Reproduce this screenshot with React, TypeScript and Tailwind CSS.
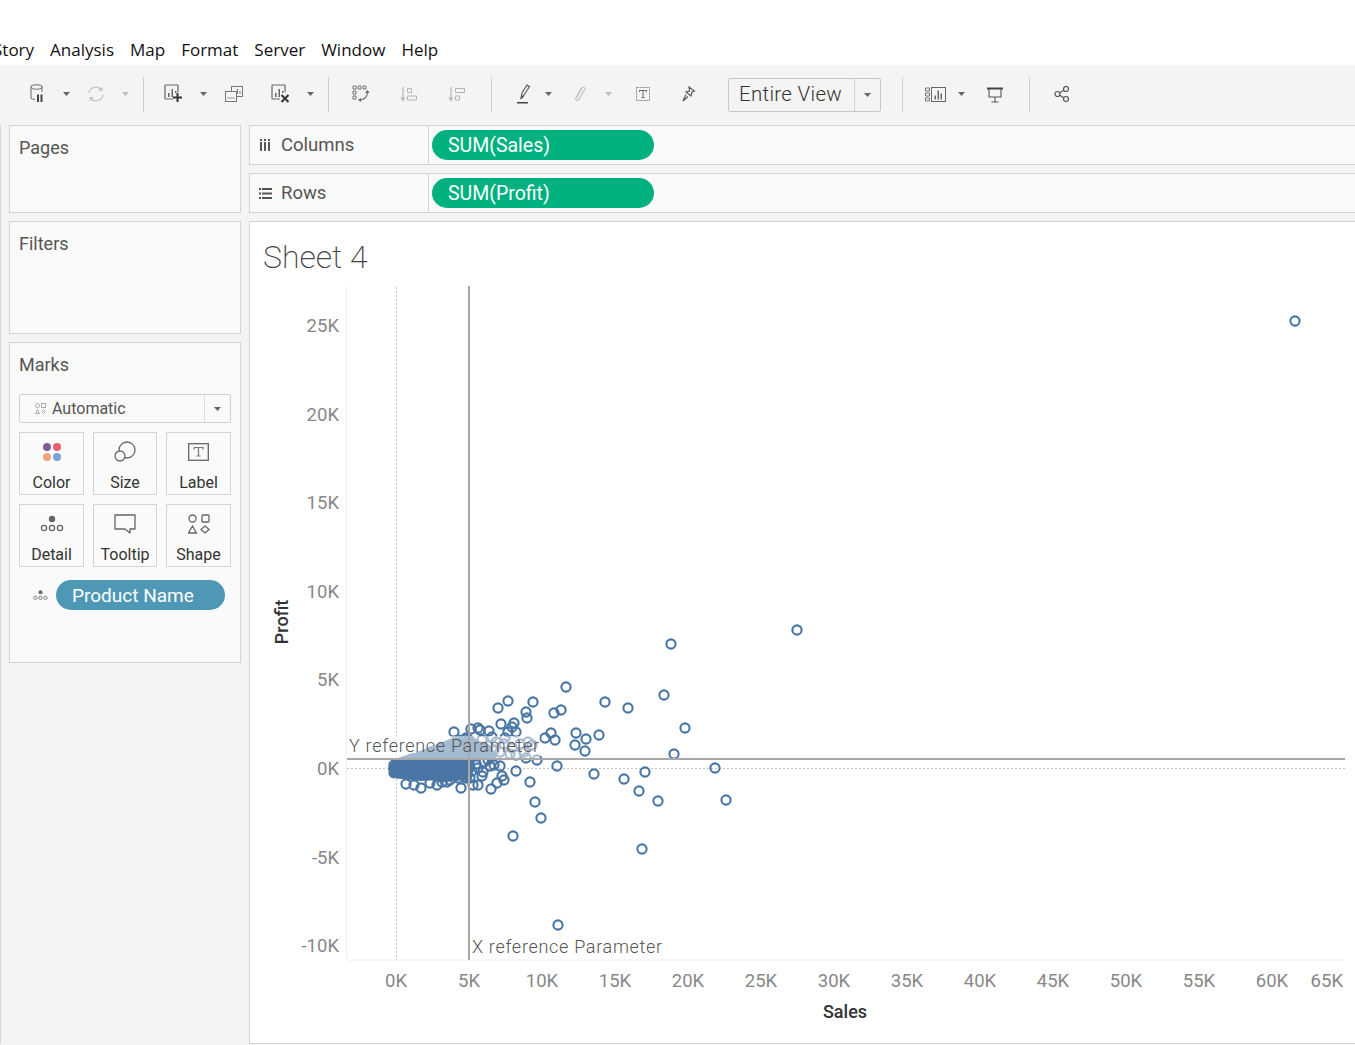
import React from 'react';

const Caret = ({ light = false, className = '' }: { light?: boolean; className?: string }) => (
  <svg width="7" height="4" viewBox="0 0 7 4" className={className}>
    <path d="M0 0h7L3.5 4z" fill={light ? '#bdbdbd' : '#666'} />
  </svg>
);

const Sep = ({ className = '' }: { className?: string }) => <div className={`w-px h-[35px] bg-[#d0d0d0] ${className}`} />;

const BarsFrame = ({ children }: { children?: React.ReactNode }) => (
  <svg width="22" height="22" viewBox="0 0 22 22" fill="none">
    <path d="M10 16H2.5a.5.5 0 0 1-.5-.5V2.500a.5.5 0 0 1 .5-.5h12a.5.500 0 0 1 .5.5V9" stroke="#666" strokeWidth="1.200" />
    <path d="M5 10h1.500v4H5zM8.500 6H10v8H8.500zM12 8h1.500v2H12z" fill="#666" />
    {children}
  </svg>
);

const Cluster = ({ small = false }: { small?: boolean }) => (
  <svg width={small ? 15 : 24} height={small ? 12 : 19} viewBox="0 0 24 19" fill="none">
    <circle cx="12" cy="5" r="3.200" fill="#666" />
    <circle cx="4" cy="14" r="2.600" stroke="#666" strokeWidth="1.300" />
    <circle cx="12" cy="14" r="2.600" stroke="#666" strokeWidth="1.300" />
    <circle cx="20" cy="14" r="2.600" stroke="#666" strokeWidth="1.300" />
  </svg>
);

const Toolbar = () => (
  <div className="h-[60px] shrink-0 bg-[#f4f4f4] flex items-center pl-[29px] pb-[2px]">
    <svg width="17" height="20" viewBox="0 0 17 20" fill="none">
      <ellipse cx="7.500" cy="3" rx="5.500" ry="2.200" stroke="#777" strokeWidth="1.100" />
      <path d="M2 3v10.500c0 1 1.500 1.700 4 2M13 3v5" stroke="#777" strokeWidth="1.100" />
      <path d="M8 10.500h2V18H8zM11.500 10.500h2V18h-2z" fill="#444" />
    </svg>
    <Caret className="ml-[17px]" />
    <svg width="18" height="18" viewBox="0 0 18 18" fill="none" className="ml-[17px]">
      <path d="M2 8a7 7 0 0 1 12.500-3M16 10a7 7 0 0 1-12.500 3" stroke="#c4c4c4" strokeWidth="1.400" />
      <path d="M15.500 1.500v4.500h-4.500zM2.500 16.500V12H7z" fill="#c4c4c4" />
    </svg>
    <Caret light className="ml-[17px]" />
    <Sep className="ml-[14px]" />
    <div className="ml-[19px] flex"><BarsFrame><path d="M14.500 10v9M10 14.500h9" stroke="#333" strokeWidth="2" /></BarsFrame></div>
    <Caret className="ml-[15px]" />
    <svg width="18" height="17" viewBox="0 0 18 17" fill="none" className="ml-[18px]">
      <rect x="6.500" y="0.500" width="11" height="10" fill="#f4f4f4" stroke="#777" />
      <path d="M10 8V6M12.500 8V3M15 8V5" stroke="#777" />
      <rect x="0.500" y="5.500" width="11" height="10" fill="#f4f4f4" stroke="#777" />
      <path d="M3 13v-2M5 13v-2M7 13v-2M9 13v-2" stroke="#999" />
    </svg>
    <div className="ml-[27px] flex"><BarsFrame><path d="M11.500 12l7 7M18.500 12l-7 7" stroke="#333" strokeWidth="2" /></BarsFrame></div>
    <Caret className="ml-[15px]" />
    <Sep className="ml-[14px]" />
    <svg width="18" height="18" viewBox="0 0 18 18" fill="none" className="ml-[23px]">
      <path d="M1 1h3v3H1zM6 1h3v3H6zM11 1h3v3h-3zM1 6h3v3H1zM1 11h3v3H1z" stroke="#666" strokeWidth="0.900" />
      <path d="M15.500 7c0 4-2.500 7-7 8" stroke="#666" strokeWidth="1.100" />
      <path d="M13 8l2.500-3L17.500 8zM9 13v4l-3-2z" fill="#666" />
    </svg>
    <svg width="18" height="17" viewBox="0 0 18 17" fill="none" className="ml-[30px]">
      <path d="M3 1v13" stroke="#b5b5b5" strokeWidth="1.200" />
      <path d="M0.500 11.500h5L3 15.500z" fill="#b5b5b5" />
      <path d="M7.500 2.500h4v4h-4zM7.500 10h9v4h-9z" stroke="#b5b5b5" />
    </svg>
    <svg width="18" height="17" viewBox="0 0 18 17" fill="none" className="ml-[30px]">
      <path d="M3 1v13" stroke="#b5b5b5" strokeWidth="1.200" />
      <path d="M0.500 11.500h5L3 15.500z" fill="#b5b5b5" />
      <path d="M7.500 2.500h9v4h-9zM7.500 10h4v4h-4z" stroke="#b5b5b5" />
    </svg>
    <Sep className="ml-[25px]" />
    <svg width="15" height="20" viewBox="0 0 15 20" fill="none" className="ml-[25px]">
      <path d="M4 14l1-5 5-8 2.500 1.500-5 8z" stroke="#555" strokeWidth="1.100" />
      <path d="M4 15l3-3" stroke="#555" />
      <path d="M0 18h11v1.500H0z" fill="#444" />
    </svg>
    <Caret className="ml-[13px]" />
    <svg width="14" height="18" viewBox="0 0 14 18" fill="none" className="ml-[21px]">
      <path d="M4 12l5-9c1-1.500 3.500-.5 2.800 1.200L6 14.500c-1 1.800-4 .8-3.200-1.200L8 3.500" stroke="#bdbdbd" strokeWidth="1.100" />
    </svg>
    <Caret light className="ml-[18px]" />
    <svg width="14" height="14" viewBox="0 0 14 14" fill="none" className="ml-[24px]">
      <rect x="0.500" y="0.500" width="13" height="13" stroke="#888" strokeDasharray="2 1" />
      <path d="M3.500 3.500h7v1.500M3.500 3.500V5M7 3.500V10.500M5.500 10.500h3" stroke="#666" />
    </svg>
    <svg width="14" height="18" viewBox="0 0 14 18" fill="none" className="ml-[32px]">
      <path d="M7 2l5.500 4-2.500 1-1 4-5-4 3.500-1zM4 9.500L1 16l5-4.500" stroke="#555" strokeWidth="1.100" />
    </svg>
    <div className="ml-[32px] w-[153px] h-[34px] mt-[1px] border border-[#c8c8c8] rounded-[2px] flex items-center">
      <span className="flex-1 pl-[10px] text-[20.5px] font-light text-[#333] tracking-[0.3px] leading-none">Entire View</span>
      <div className="w-[26px] h-full border-l border-[#d4d4d4] flex items-center justify-center"><Caret /></div>
    </div>
    <Sep className="ml-[21px]" />
    <svg width="21" height="15" viewBox="0 0 21 15" fill="none" className="ml-[22px]">
      <path d="M.5 1h4v3h-4zM.5 6h4v3h-4zM.5 11h4v3h-4z" stroke="#666" strokeWidth="0.900" />
      <rect x="6.500" y="0.500" width="14" height="14" stroke="#666" />
      <path d="M9.500 8.500h1.500v4H9.500zM12.500 3.500H14v9h-1.500zM15.500 6.500H17v6h-1.500z" fill="#666" />
    </svg>
    <Caret className="ml-[12px]" />
    <svg width="18" height="17" viewBox="0 0 18 17" fill="none" className="ml-[21px]">
      <path d="M1 2.500h16" stroke="#444" strokeWidth="2" />
      <path d="M3 3v8h12V3M9 11v5M5.500 16h7" stroke="#555" strokeWidth="1.100" />
    </svg>
    <Sep className="ml-[25px]" />
    <svg width="16" height="16" viewBox="0 0 16 16" fill="none" className="ml-[24px]">
      <circle cx="3.500" cy="8" r="2.500" stroke="#555" strokeWidth="1.200" />
      <circle cx="12" cy="3" r="2.500" stroke="#555" strokeWidth="1.200" />
      <circle cx="12" cy="13" r="2.500" stroke="#555" strokeWidth="1.200" />
      <path d="M5.700 6.700l4-2.500M5.700 9.300l4 2.500" stroke="#555" strokeWidth="1.200" />
    </svg>
  </div>
);

const MarkCard = ({ icon, label }: { icon: React.ReactNode; label: string }) => (
  <div className="h-[63px] border border-[#d4d4d4] flex flex-col items-center">
    <div className="h-[37px] flex items-center justify-center">{icon}</div>
    <span className="mt-[3px] text-[16px] leading-[20px] text-[#333]">{label}</span>
  </div>
);

const Sidebar = () => (
  <div className="w-[249px] shrink-0 pl-[9px] pr-[8px] flex flex-col gap-[8px] border-l border-[#d8d8d8]">
    <div className="h-[88px] bg-[#fafafa] border border-[#d4d4d4] px-[9px] pt-[11px] text-[18px] leading-[22px] text-[#555] -ml-px">Pages</div>
    <div className="h-[113px] bg-[#fafafa] border border-[#d4d4d4] px-[9px] pt-[11px] text-[18px] leading-[22px] text-[#555] -ml-px">Filters</div>
    <div className="h-[321px] bg-[#fafafa] border border-[#d4d4d4] px-[9px] pt-[11px] -ml-px">
      <div className="text-[18px] leading-[22px] text-[#555]">Marks</div>
      <div className="mt-[18px] h-[29px] border border-[#d0d0d0] rounded-[2px] flex items-center">
        <svg width="11" height="11" viewBox="0 0 11 11" fill="none" className="ml-[15px]">
          <circle cx="2.500" cy="2.500" r="2" stroke="#aaa" />
          <rect x="6.500" y="0.500" width="4" height="4" stroke="#aaa" />
          <path d="M2.500 6.500l2 4h-4zM8.500 6.500l2 2-2 2-2-2z" stroke="#aaa" />
        </svg>
        <span className="ml-[6px] flex-1 text-[16px] text-[#555] leading-none">Automatic</span>
        <div className="w-[26px] h-full border-l border-[#dcdcdc] flex items-center justify-center"><Caret /></div>
      </div>
      <div className="mt-[9px] grid grid-cols-[65px_64px_65px] gap-x-[9px] gap-y-[9px]">
        <MarkCard
          label="Color"
          icon={
            <svg width="20" height="20" viewBox="0 0 20 20">
              <circle cx="5" cy="5" r="4" fill="#7b5f96" />
              <circle cx="15" cy="5" r="4" fill="#ef5b70" />
              <circle cx="5" cy="15" r="4" fill="#f2a57c" />
              <circle cx="15" cy="15" r="4" fill="#7ba6d3" />
            </svg>
          }
        />
        <MarkCard
          label="Size"
          icon={
            <svg width="22" height="21" viewBox="0 0 22 21" fill="none">
              <circle cx="13" cy="9" r="8" stroke="#666" strokeWidth="1.300" />
              <circle cx="6" cy="15" r="5" fill="#fafafa" stroke="#666" strokeWidth="1.300" />
            </svg>
          }
        />
        <MarkCard
          label="Label"
          icon={
            <svg width="21" height="18" viewBox="0 0 21 18" fill="none">
              <rect x="0.700" y="0.700" width="19.600" height="16.600" stroke="#666" strokeWidth="1.300" />
              <path d="M6 4.500h9v2M6 4.500v2M10.500 4.500V13M8.500 13h4" stroke="#777" strokeWidth="1.200" />
            </svg>
          }
        />
        <MarkCard label="Detail" icon={<Cluster />} />
        <MarkCard
          label="Tooltip"
          icon={
            <svg width="22" height="20" viewBox="0 0 22 20" fill="none">
              <path d="M1 1h20v14h-5v4l-5-4H1z" stroke="#666" strokeWidth="1.300" strokeLinejoin="round" />
            </svg>
          }
        />
        <MarkCard
          label="Shape"
          icon={
            <svg width="22" height="20" viewBox="0 0 22 20" fill="none">
              <circle cx="4.500" cy="4.500" r="3.500" stroke="#666" strokeWidth="1.300" />
              <rect x="14" y="1" width="7" height="7" rx="1" stroke="#666" strokeWidth="1.300" />
              <path d="M4.500 12l4 7h-8zM17 12l4 3.500-4 3.500-4-3.500z" stroke="#666" strokeWidth="1.300" />
            </svg>
          }
        />
      </div>
      <div className="mt-[13px] flex items-center">
        <div className="ml-[14px] flex"><Cluster small /></div>
        <div className="ml-[8px] w-[169px] h-[30px] rounded-full bg-[#4e98b5] text-white text-[19px] leading-[31px] pl-[16px]">Product Name</div>
      </div>
    </div>
  </div>
);

const Shelf = ({ icon, label, pill }: { icon: React.ReactNode; label: string; pill: string }) => (
  <div className="h-[40px] bg-[#fafafa] border border-r-0 border-[#d4d4d4] flex items-center">
    <div className="w-[179px] h-full border-r border-[#d4d4d4] flex items-center pl-[8px]">
      <div className="w-[14px] flex justify-center">{icon}</div>
      <span className="ml-[9px] mt-[1px] text-[18.500px] text-[#555] leading-none">{label}</span>
    </div>
    <div className="ml-[3px] w-[222px] h-[30px] rounded-full bg-[#00b180] text-white text-[19.500px] leading-[31px] pl-[16px]">{pill}</div>
  </div>
);

const xTicks = [0, 5, 10, 15, 20, 25, 30, 35, 40, 45, 50, 55, 60];
const yTicks = [25, 20, 15, 10, 5, 0, -5, -10];

const points: [number, number][] = [
  [1295, 321], [797, 630], [671, 644], [566, 687], [508, 701], [498, 708], [533, 702], [526, 712], [527, 718],
  [554, 713], [561, 710], [605, 702], [628, 708], [664, 695], [685, 728], [501, 724], [514, 723], [512, 727],
  [551, 733], [555, 740], [576, 733], [586, 739], [599, 735], [575, 745], [585, 751], [674, 754], [557, 766],
  [537, 760], [516, 771], [530, 782], [594, 774], [624, 779], [645, 772], [639, 791], [658, 801], [715, 768],
  [726, 800], [535, 802], [541, 818], [513, 836], [642, 849], [558, 925], [491, 789], [497, 783], [504, 780],
  [502, 776], [494, 765], [500, 766], [483, 772], [478, 785], [473, 785], [461, 788], [437, 785], [421, 788],
  [414, 785], [406, 784], [447, 782], [489, 731], [545, 738], [471, 729], [478, 728], [480, 730], [454, 732],
  [508, 732], [516, 732], [526, 758], [466, 778], [472, 771], [478, 768], [484, 762], [490, 756], [462, 772],
  [468, 762], [476, 756], [458, 778], [450, 780], [442, 782], [430, 783], [488, 746], [496, 742], [504, 744],
  [512, 748], [520, 744], [528, 742], [482, 740], [474, 744], [466, 738], [458, 740], [500, 752], [510, 754],
  [490, 766], [470, 778], [464, 766], [532, 745], [524, 752], [516, 755], [505, 738], [492, 737], [480, 748],
  [494, 750], [486, 752], [476, 764], [482, 776], [488, 760],
];

// dense cloud near the origin, same seed every render
const cloud: [number, number][] = Array.from({ length: 320 }, (_, i) => {
  const a = (i * 37) % 97;
  const b = (i * 61) % 89;
  const x = 394 + (a / 97) * 76;
  const top = 765 - (x - 394) * 0.36;
  const bottom = 773 + (x - 394) * 0.08;
  return [x, top + (b / 89) * (bottom - top)];
});

const Chart = () => (
  <div className="relative flex-1 bg-white border border-r-0 border-[#d4d4d4] overflow-hidden">
    <div className="pl-[13px] pt-[16px] text-[32px] leading-[38px] font-extralight text-[#444]">Sheet 4</div>
    <svg width="1105" height="823" viewBox="250 222 1105 823" className="absolute left-0 top-0" fontFamily="Roboto, sans-serif">
      <path d="M346.500 287V960H1345" stroke="#f0f0f0" fill="none" />
      <path d="M396.500 287V960" stroke="#c4c4c4" strokeDasharray="2 2" />
      <path d="M347 768.500H1345" stroke="#c4c4c4" strokeDasharray="2 2" />
      <path d="M390 768 L397 761 L452 738 L472 738 L490 745 L498 757 L470 760 L466 772 L458 779 L420 781 L398 778 Z" fill="#4a76a5" />
      {cloud.map(([x, y], i) => (
        <circle key={i} cx={x} cy={y} r="4.600" fill="none" stroke="#4a76a5" strokeWidth="2.100" />
      ))}
      {points.map(([x, y], i) => (
        <circle key={i} cx={x} cy={y} r="4.600" fill="none" stroke="#4a76a5" strokeWidth="2.100" />
      ))}
      <rect x="349" y="736" width="191" height="22" fill="#fff" fillOpacity="0.5" />
      <path d="M469 286V960" stroke="#a8a8a8" strokeWidth="2" />
      <path d="M347 759H1345" stroke="#a8a8a8" strokeWidth="2" />
      <text x="349" y="752" fontSize="18" fontWeight="300" letterSpacing="0.7" fill="#555">Y reference Parameter</text>
      <text x="472" y="953" fontSize="18" fontWeight="300" letterSpacing="0.7" fill="#555">X reference Parameter</text>
      {yTicks.map((t) => (
        <text key={t} x="339" y={768 - t * 17.72 + 7} fontSize="18.500" fill="#888" textAnchor="end">{t}K</text>
      ))}
      {xTicks.map((t) => (
        <text key={t} x={396 + t * 14.6} y="987" fontSize="18.500" fill="#888" textAnchor="middle">{t}K</text>
      ))}
      <text x="1343" y="987" fontSize="18.500" fill="#888" textAnchor="end">65K</text>
      <text x="845" y="1018" fontSize="18" fontWeight="500" fill="#333" textAnchor="middle">Sales</text>
      <text transform="translate(288 622) rotate(-90)" fontSize="18" fontWeight="500" fill="#333" textAnchor="middle">Profit</text>
    </svg>
  </div>
);

export default function App() {
  return (
    <div className="w-[1355px] h-[1045px] overflow-hidden bg-white flex flex-col font-['Roboto',sans-serif]">
      <div className="h-[65px] shrink-0 flex items-end gap-[16px] pb-[3px] -ml-[7px] font-['Open_Sans',sans-serif] text-[17px] leading-[24px] text-[#111]">
        {['Story', 'Analysis', 'Map', 'Format', 'Server', 'Window', 'Help'].map((m) => (
          <span key={m}>{m}</span>
        ))}
      </div>
      <Toolbar />
      <div className="flex-1 flex bg-[#f4f4f4] pb-px min-h-0">
        <Sidebar />
        <div className="flex-1 flex flex-col gap-[8px] min-w-0">
          <Shelf
            label="Columns"
            pill="SUM(Sales)"
            icon={<svg width="12" height="12" viewBox="0 0 12 12"><path d="M1 0h2v2H1zM1 3h2v9H1zM5 0h2v2H5zM5 3h2v9H5zM9 0h2v2H9zM9 3h2v9H9z" fill="#555" /></svg>}
          />
          <Shelf
            label="Rows"
            pill="SUM(Profit)"
            icon={<svg width="13" height="11" viewBox="0 0 13 11"><path d="M0 0h2v2H0zM3 0h10v2H3zM0 4.500h2v2H0zM3 4.500h10v2H3zM0 9h2v2H0zM3 9h10v2H3z" fill="#555" /></svg>}
          />
          <Chart />
        </div>
      </div>
    </div>
  );
}
